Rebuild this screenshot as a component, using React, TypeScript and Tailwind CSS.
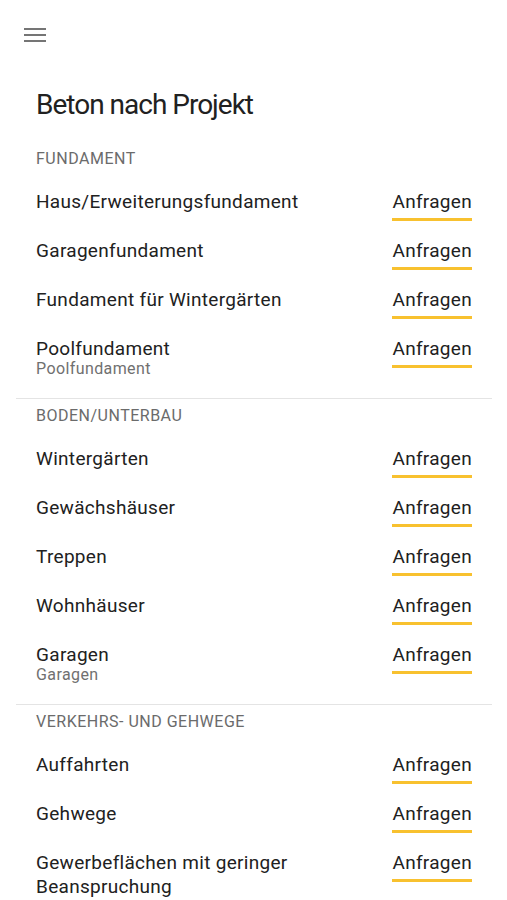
import React from "react";

interface Item {
  title: string;
  subtitle?: string;
}

interface Section {
  name: string;
  items: Item[];
}

const sections: Section[] = [
  {
    name: "FUNDAMENT",
    items: [
      { title: "Haus/Erweiterungsfundament" },
      { title: "Garagenfundament" },
      { title: "Fundament für Wintergärten" },
      { title: "Poolfundament", subtitle: "Poolfundament" },
    ],
  },
  {
    name: "BODEN/UNTERBAU",
    items: [
      { title: "Wintergärten" },
      { title: "Gewächshäuser" },
      { title: "Treppen" },
      { title: "Wohnhäuser" },
      { title: "Garagen", subtitle: "Garagen" },
    ],
  },
  {
    name: "VERKEHRS- UND GEHWEGE",
    items: [
      { title: "Auffahrten" },
      { title: "Gehwege" },
      { title: "Gewerbeflächen mit geringer Beanspruchung" },
    ],
  },
];

function Row({ item }: { item: Item }) {
  return (
    <div className="flex items-start justify-between gap-6 px-5 py-[9px]">
      <div className="min-w-0 flex-1">
        <p className="text-[19px] leading-6 tracking-[0.3px] text-[#212121]">
          {item.title}
        </p>
        {item.subtitle && (
          <p className="text-[16px] leading-4 tracking-[0.4px] text-[#707070]">
            {item.subtitle}
          </p>
        )}
      </div>
      <button className="shrink-0 border-b-[3px] border-[#f8c12f] pb-1 text-[19px] leading-6 tracking-[0.3px] text-[#212121]">
        Anfragen
      </button>
    </div>
  );
}

export default function App() {
  return (
    <div
      className="min-h-screen w-[507px] bg-white"
      style={{ fontFamily: "Roboto, 'Noto Sans', sans-serif" }}
    >
      {/* Toolbar */}
      <div className="h-[70px] pl-6 pt-[28px]">
        <svg width="22" height="14" viewBox="0 0 22 14" className="block">
          <rect x="0" y="0" width="22" height="2" fill="#757575" />
          <rect x="0" y="6" width="22" height="2" fill="#757575" />
          <rect x="0" y="12" width="22" height="2" fill="#757575" />
        </svg>
      </div>

      <h1 className="mt-[17px] pl-9 text-[28px] leading-9 tracking-[-1px] text-[#212121]">
        Beton nach Projekt
      </h1>

      <div className="ml-4 mr-[15px] mt-[26px]">
        {sections.map((section, i) => (
          <div
            key={section.name}
            className={
              i > 0
                ? "border-t border-[#e4e4e4] pt-[7px] pb-[12px]"
                : "pb-[12px]"
            }
          >
            <h2 className="mb-3 px-5 text-[16px] leading-5 tracking-[0.5px] text-[#6b6b6b]">
              {section.name}
            </h2>
            {section.items.map((item) => (
              <Row key={item.title} item={item} />
            ))}
          </div>
        ))}
      </div>
    </div>
  );
}
